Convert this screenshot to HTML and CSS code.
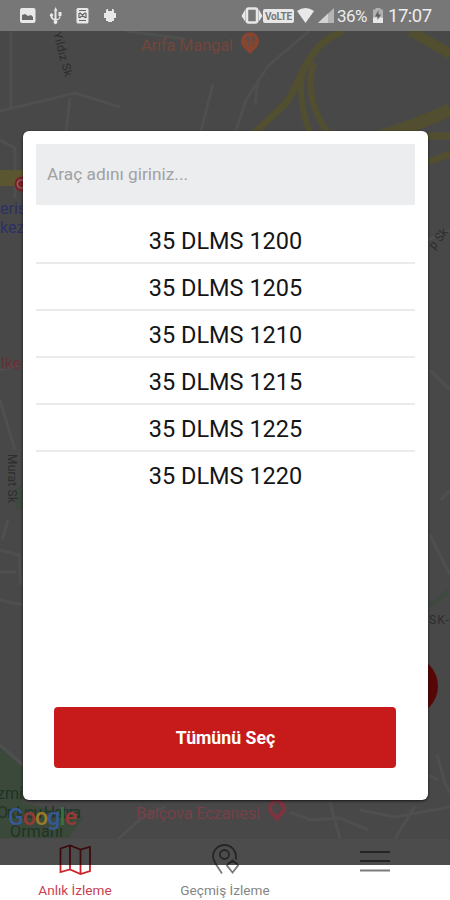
FILE: index.html
```html
<!DOCTYPE html>
<html lang="tr">
<head>
<meta charset="utf-8">
<title>Araç Takip</title>
<link rel="stylesheet" href="styles.css">
</head>
<body>
<div class="phone">
  <header class="status">
    <svg class="status-left" width="120" height="31" viewBox="0 0 120 31">
      <rect x="20" y="8" width="15.500" height="15" rx="2"/>
      <path class="cut" d="M22 20V15l3-1 3 2 3-1 2 2v3z"/>
      <path d="M54 11l1.500-4 2 4h-1v8c2 0 3-1 3-3h-1v-4h3v4h-1c0 3-2 4-4 4.500a1.900 1.900 0 1 1-2 0c-2-.5-4-2-4-4a1.700 1.700 0 1 1 2 0c0 1 1 2 2 2.300V11z"/>
      <rect x="76.500" y="8" width="12" height="15.500" rx="1.500"/>
      <path class="cut-line" d="M79 10.500h7M79 20.500h7M79.500 12.500l6 5.500M85.500 12.500l-6 5.500M79 13v5M86 13v5"/>
      <path d="M106 9l2 2h4l2-2v4h2v5h-2v3h-2v1h-4v-1h-2v-3h-2v-5h2zM107 9h1v2h-1zM112 9h1v2h-1z"/>
    </svg>
    <div class="status-right">
      <svg width="94" height="31" viewBox="0 0 94 31">
        <rect x="6" y="8.500" width="10" height="14" rx="1.500" fill="none" stroke="#e8e8e8" stroke-width="2.500"/>
        <path d="M4.500 9v13L.5 16zM17.500 9v13l4-6z"/>
        <rect x="22" y="9" width="31" height="14" rx="2"/>
        <text class="volte" x="37.500" y="19.500" text-anchor="middle" textLength="27">VoLTE</text>
        <path d="M56 11Q64.500 5 73 11l-8.500 12z"/>
        <path d="M77 23L93 8v15z" fill="#b5b5b5"/>
        <path d="M77 23l10-9.500V23z" fill="#d2d2d2"/>
      </svg>
      <span class="percent">36%</span>
      <svg class="battery" width="12" height="31" viewBox="0 0 12 31">
        <path d="M1 9.500h2.500V8h5v1.500H11V23H1z" fill="#b1b1b1"/>
        <path d="M1 17.500h10V23H1z"/>
        <path d="M6.500 10L3 16.500h2.500V20L9 14.500H6.500z" fill="#5e5e5e"/>
      </svg>
      <span class="clock">17:07</span>
    </div>
  </header>

  <main class="map">
    <svg width="450" height="808" viewBox="0 31 450 808">
      <g class="street">
        <path d="M11 31v78M0 111L55 98l20-5 45 14M70 98l-4 33M213 84L201 131M125 31l60 8"/>
        <path d="M309 31L268 66 246 100 236 131M258 80l-3 25"/>
        <path d="M0 140l15 8v50M0 370l18-5M0 400l15 50M8 520L2 540M0 550l19 5 2 30M0 572h16M0 600l23 5"/>
        <path d="M428 240l22-10M430 535l20 40M430 370l20 20M441 500l9-10M437 755l8 28 5 10M428 775l10 5"/>
        <path d="M0 745l23 20M118 839l25-22 22-10M290 812l20 8 30-2 28 12M330 802l10 37M395 839l20-33M360 810l35 7 55-10"/>
      </g>
      <path d="M0 748l23 20v35l60 15-15 20H0z" fill="#3a4939"/>
      <path d="M15 490l8-7v26h-7zM428 604l20-15v6l-20 14z" fill="#3f4940"/>
      <g class="highway">
        <path d="M343 31C323 39 313 51 303 71L288 101 248 139" stroke-width="7"/>
        <path d="M303 68Q297 101 310 133M314 63Q303 98 328 133" stroke-width="6"/>
        <path d="M410 31Q434 44 450 54" stroke-width="10"/>
        <path d="M378 137Q410 128 450 110" stroke-width="13"/>
        <path d="M428 136h22M428 162l22-8" stroke-width="7"/>
      </g>
      <path d="M0 170h23v16H0z" fill="#5b562f"/>
      <circle cx="22" cy="184" r="7.500" fill="#7d1f24"/>
      <path d="M24 181a4 4 0 1 0 0 6" fill="none" stroke="#8b6a6a" stroke-width="1.500"/>
      <text class="poi" x="141" y="51" textLength="92">Arifa Mangal</text>
      <path d="M250 54l-6-6a9 9 0 1 1 12 0z" fill="#89452f"/>
      <path d="M247 36v4q3 2 3-1M248.500 36v10M253 36v10M253 36q2 1 2 5h-2" fill="none" stroke="#5c4e48" stroke-width="1.200"/>
      <text class="road" transform="translate(53 33) rotate(75)" textLength="46">Yıldız Sk</text>
      <text class="area" x="0" y="214">eris</text>
      <text class="area" x="0" y="233">kez</text>
      <text class="poi-red" x="1" y="369">lke</text>
      <text class="road" transform="translate(8 454) rotate(90)" textLength="49">Murat Sk</text>
      <text class="road" transform="translate(434 250) rotate(-50)">p Sk</text>
      <text class="road" x="429" y="624" textLength="20">SK-</text>
      <circle cx="408" cy="686" r="30" fill="#570707"/>
      <text class="park" x="-3" y="799">zmir</text>
      <text class="park" x="-3" y="818" textLength="84">Ordusu Hatıra</text>
      <text class="park" x="10" y="837" textLength="53">Ormanı</text>
      <text class="google" x="8" y="825" textLength="69"><tspan fill="#345996">G</tspan><tspan fill="#973936">o</tspan><tspan fill="#9a7c28">o</tspan><tspan fill="#345996">g</tspan><tspan fill="#39723e">l</tspan><tspan fill="#973936">e</tspan></text>
      <text class="pharmacy" x="136" y="819" textLength="124">Balçova Eczanesi</text>
      <path d="M277 822l-6-7a9 9 0 1 1 12 0z" fill="#7c3440"/>
      <path d="M274 803h6v3h2v5h-2v3h-6v-3h-2v-5h2z" fill="#4d4647"/>
    </svg>
  </main>

  <nav class="tabs">
    <a class="tab active">
      <svg width="36" height="34" viewBox="0 0 36 34"><path d="M3.500 7.500l9.500-3 10.500 4 9.500-2.500v24l-9.500 3L13 28.500l-9.500 2.500zM13 4.500v24M23.500 8.500V33"/></svg>
      <span>Anlık İzleme</span>
    </a>
    <a class="tab">
      <svg width="36" height="34" viewBox="0 0 36 34"><path d="M15 32.500C10 25 6 20 6 15.500a11.500 11.500 0 0 1 23 0v3"/><circle cx="17.500" cy="13.500" r="4.500"/><path d="M25.500 31.500l-5.500-7a6 6 0 0 1 11 0zM22 22.500l3.500-3 3.500 3"/></svg>
      <span>Geçmiş İzleme</span>
    </a>
    <a class="tab">
      <svg width="36" height="34" viewBox="0 0 36 34"><path d="M3 11h30M3 20h30M3 29.500h30"/></svg>
    </a>
  </nav>
  <div class="scrim"></div>

  <section class="dialog">
    <input class="search" type="text" placeholder="Araç adını giriniz...">
    <ul class="vehicles">
      <li>35 DLMS 1200</li>
      <li>35 DLMS 1205</li>
      <li>35 DLMS 1210</li>
      <li>35 DLMS 1215</li>
      <li>35 DLMS 1225</li>
      <li>35 DLMS 1220</li>
    </ul>
    <button class="select-all">Tümünü Seç</button>
  </section>
</div>
</body>
</html>
```
FILE: styles.css
```css
* { box-sizing: border-box; }
body { margin: 0; font-family: Roboto, "Liberation Sans", sans-serif; }
.phone {
  position: relative;
  display: flex;
  flex-direction: column;
  width: 450px;
  height: 900px;
  overflow: hidden;
  background: #fff;
}
svg { display: block; flex: none; }

.status {
  display: flex;
  justify-content: space-between;
  height: 31px;
  padding-right: 18px;
  background: #777;
  color: #ececec;
  fill: #e8e8e8;
}
.status .cut { fill: #686868; }
.status .cut-line { fill: none; stroke: #666; stroke-width: 1.2; }
.status-right { display: flex; line-height: 32px; white-space: nowrap; }
.volte { font-size: 10px; font-weight: 700; fill: #777; }
.percent { width: 32px; margin-left: 2px; font-size: 17px; letter-spacing: -0.6px; }
.battery { margin: 0 4px 0 3px; }
.clock { width: 44px; font-size: 18.500px; letter-spacing: -0.5px; }

.map { height: 808px; background: #484848; }
.street { fill: none; stroke: #4e4f4f; stroke-width: 3; }
.highway { fill: none; stroke: #524f30; }
.poi { font-size: 16.500px; fill: #74463c; }
.poi-red { font-size: 16px; fill: #6b3036; }
.pharmacy { font-size: 16.500px; fill: #764048; }
.road { font-size: 12px; fill: #2c2d2d; }
.area { font-size: 16px; fill: #2b3065; }
.park { font-size: 16px; fill: #1f3426; }
.google { font-size: 23px; font-weight: 500; }

.tabs { display: flex; height: 61px; background: #fff; }
.tab {
  display: flex;
  flex: 1;
  flex-direction: column;
  align-items: center;
  padding-top: 2px;
  color: #858585;
  font-size: 13.600px;
  line-height: 16px;
}
.tab svg { fill: none; stroke: #7c7c7c; stroke-width: 1.8; }
.tab span { margin-top: 7px; }
.tab.active { color: #c94151; }
.tab.active svg { stroke: #c9252c; }
.scrim {
  position: absolute;
  top: 839px;
  left: 0;
  width: 450px;
  height: 26px;
  background: rgba(0, 0, 0, .7);
}

.dialog {
  position: absolute;
  top: 131px;
  left: 23px;
  display: flex;
  flex-direction: column;
  width: 405px;
  height: 669px;
  padding: 13px 13px 32px;
  border-radius: 6px;
  background: #fff;
  box-shadow: 0 1px 3px rgba(0, 0, 0, .7);
}
.search {
  width: 379px;
  height: 61px;
  padding: 0 11px 2px;
  border: 0;
  background: #ecedef;
  font: 17.300px Roboto, "Liberation Sans", sans-serif;
}
.search::placeholder { color: #a0a1a2; opacity: 1; }
.vehicles { margin: 12px 0 0; padding: 0; list-style: none; }
.vehicles li {
  height: 47.100px;
  border-bottom: 2px solid #e9ebec;
  color: #151515;
  font-size: 23.500px;
  line-height: 49px;
  text-align: center;
}
.vehicles li:last-child { border-bottom: 0; }
.select-all {
  width: 342px;
  height: 61px;
  margin: auto auto 0 18px;
  padding: 1px 0 0 1px;
  border: 0;
  border-radius: 4px;
  background: #c71b1b;
  color: #fff;
  font: 700 17.700px/60px Roboto, "Liberation Sans", sans-serif;
}
```
